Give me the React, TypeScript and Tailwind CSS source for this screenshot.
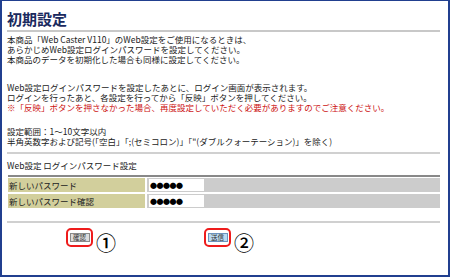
import React from 'react';

const jp = { fontFamily: '"Noto Sans CJK JP", "Liberation Sans", sans-serif' };

const PasswordRow: React.FC<{ label: string }> = ({ label }) => (
  <div className="flex h-[14px] gap-[2px]">
    <div className="w-[137px] bg-[#d2cf9c] pl-[1px] text-[8.5px] leading-[14px] text-[#222]">{label}</div>
    <div className="flex flex-1 items-center bg-[#cccccc] pl-[2px]">
      <div className="flex h-[12px] w-[55px] items-center bg-white pl-[1px] text-[7px] leading-none tracking-[-0.5px] text-black">
        ●●●●●
      </div>
    </div>
  </div>
);

const MarkedButton: React.FC<{ label: string; num: string; blue?: boolean }> = ({ label, num, blue }) => (
  <div className="flex items-start gap-[3px]">
    <div className="flex h-[19px] w-[27px] items-center justify-center rounded-[5px] border-2 border-[#ee1c1c]">
      <button
        className={
          blue
            ? 'h-[9px] w-[20px] border border-[#6b93bd] bg-[#b9daf2] text-[6.5px] leading-[7px] text-[#333]'
            : 'h-[9px] w-[20px] border border-[#8a8a8a] bg-[#dcdcdc] text-[6.5px] leading-[7px] text-[#333]'
        }
      >
        {label}
      </button>
    </div>
    <span className="mt-[6px] text-[20px] leading-[18px] font-medium text-black">{num}</span>
  </div>
);

export default function App() {
  return (
    <div
      style={jp}
      className="h-[277px] w-[450px] overflow-hidden border-x-2 border-t border-b-2 border-[#213f8f] bg-white pl-[5px] pr-[8px]"
    >
      <div className="flex h-[29px] items-end pb-[4px]">
        <h1 className="text-[15px] leading-[15px] font-bold text-[#1a2a5e]">初期設定</h1>
      </div>
      <div className="h-[2px] bg-[#c8c8c8]" />

      <div className="mt-[2px] text-[8.5px] leading-[10px] text-[#222]">
        <p>本商品「Web Caster V110」のWeb設定をご使用になるときは、</p>
        <p>あらかじめWeb設定ログインパスワードを設定してください。</p>
        <p>本商品のデータを初期化した場合も同様に設定してください。</p>

        <p className="mt-[18px]">Web設定ログインパスワードを設定したあとに、ログイン画面が表示されます。</p>
        <p>ログインを行ったあと、各設定を行ってから「反映」ボタンを押してください。</p>
        <p className="text-[#cc1111]">※「反映」ボタンを押さなかった場合、再度設定していただく必要がありますのでご注意ください。</p>

        <p className="mt-[14px]">設定範囲：1～10文字以内</p>
        <p>半角英数字および記号(「空白」「;(セミコロン)」「"(ダブルクォーテーション)」を除く)</p>
      </div>

      <div className="mt-[6px] h-[2px] bg-[#d0d0d0]" />

      <div className="mt-[6px] text-[8.5px] leading-[10px] text-[#222]">Web設定 ログインパスワード設定</div>

      <div className="ml-[1px] mt-[5px]">
        <div className="h-[2px] bg-[#888888]" />
        <div className="mt-[1px] flex flex-col gap-[2px]">
          <PasswordRow label="新しいパスワード" />
          <PasswordRow label="新しいパスワード確認" />
        </div>
      </div>

      <div className="mt-[13px] h-[2px] bg-[#d0d0d0]" />

      <div className="mt-[5px] flex pl-[59px]">
        <MarkedButton label="確認" num="①" />
        <div className="ml-[88px]">
          <MarkedButton label="送信" num="②" blue />
        </div>
      </div>
    </div>
  );
}
